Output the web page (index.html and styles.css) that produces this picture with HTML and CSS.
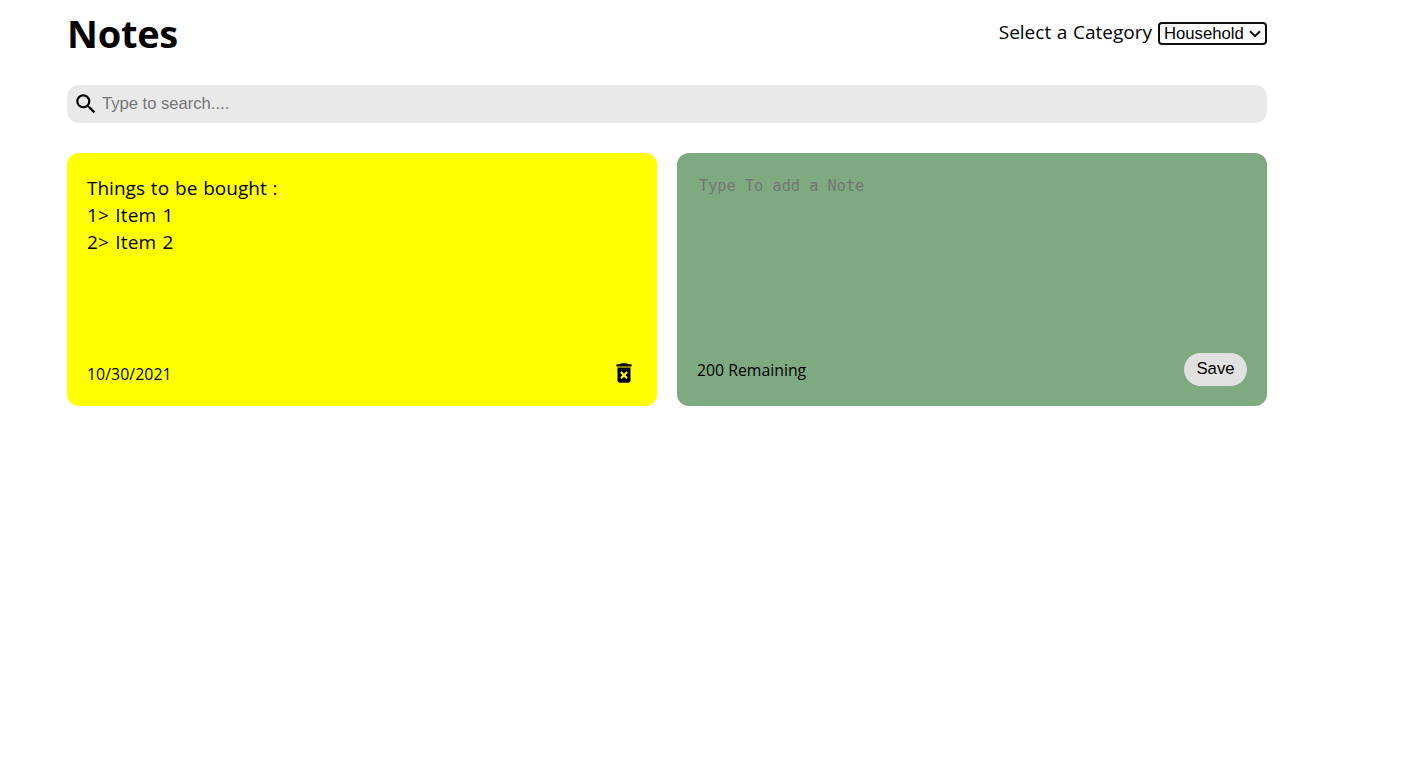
FILE: index.html
```html
<!DOCTYPE html>
<html lang="en">
<head>
<meta charset="utf-8">
<title>Notes</title>
<link rel="stylesheet" href="styles.css">
</head>
<body>
<main class="container">
  <header class="header">
    <h1 class="title">Notes</h1>
    <div class="category">
      <label class="category-label" for="category">Select a Category</label>
      <div class="select-box">
        <select class="select" id="category"><option>Household</option></select>
        <svg class="chevron" viewBox="0 0 12 8"><path d="M1 1.2 6 6.2 11 1.2" fill="none" stroke="#101010" stroke-width="2"/></svg>
      </div>
    </div>
  </header>
  <div class="search">
    <svg class="search-icon" viewBox="0 0 24 24"><path d="M15.5 14h-.79l-.28-.27A6.471 6.471 0 0 0 16 9.5 6.5 6.5 0 1 0 9.5 16c1.61 0 3.09-.59 4.23-1.57l.27.28v.79l5 4.99L20.49 19l-4.99-5zm-6 0C7.01 14 5 11.99 5 9.5S7.01 5 9.5 5 14 7.01 14 9.5 11.99 14 9.5 14z"/></svg>
    <input class="search-input" type="text" placeholder="Type to search....">
  </div>
  <section class="notes">
    <article class="note">
      <div class="note-text"><span class="line-title">Things to be bought :</span><span class="line-item">1&gt; Item 1</span><span class="line-item">2&gt; Item 2</span></div>
      <footer class="note-footer">
        <small class="date">10/30/2021</small>
        <svg class="delete-icon" viewBox="0 0 24 24"><path d="M6 19c0 1.1.9 2 2 2h8c1.1 0 2-.9 2-2V7H6v12zm2.46-7.12 1.41-1.41L12 12.59l2.12-2.12 1.41 1.41L13.41 14l2.12 2.12-1.41 1.41L12 15.41l-2.12 2.12-1.41-1.41L10.59 14l-2.13-2.12zM15.5 4l-1-1h-5l-1 1H5v2h14V4z"/></svg>
      </footer>
    </article>
    <article class="note note-new">
      <textarea class="new-text" placeholder="Type To add a Note"></textarea>
      <footer class="note-footer">
        <small class="remaining">200 Remaining</small>
        <button class="save">Save</button>
      </footer>
    </article>
  </section>
</main>
</body>
</html>
```

FILE: styles.css
```css
* { box-sizing: border-box; }
body {
  margin: 0;
  background: #fff;
  color: #000;
  font-family: "Open Sans", "Noto Sans", sans-serif;
}
.container { width: 1200px; margin-left: 67px; }
.header {
  display: flex;
  justify-content: space-between;
  height: 85px;
}
.title {
  margin: 6px 0 0;
  font-size: 38px;
  line-height: 54px;
  font-weight: 700;
  letter-spacing: -.25px;
}
.category { display: flex; align-items: flex-start; gap: 6px; }
.category-label {
  margin-top: 19px;
  font-size: 19px;
  line-height: 27px;
  word-spacing: .7px;
  white-space: nowrap;
}
.select-box { display: grid; width: 109px; margin-top: 22px; }
.select {
  grid-area: 1 / 1;
  appearance: none;
  width: 109px;
  height: 23px;
  margin: 0;
  padding: 0 4px;
  border: 2px solid #101010;
  border-radius: 4px;
  background: #fff;
  color: #000;
  font: 16.7px "Liberation Sans", sans-serif;
}
.chevron {
  grid-area: 1 / 1;
  place-self: center end;
  width: 12px;
  height: 8px;
  margin-right: 6px;
  pointer-events: none;
}
.search {
  display: flex;
  align-items: center;
  height: 38px;
  padding: 0 6px;
  border-radius: 12px;
  background: #e9e9e9;
}
.search-icon { width: 26px; height: 26px; }
.search-input {
  flex: 1;
  height: 20px;
  margin: 0 0 1px;
  padding: 0 3px;
  border: 0;
  outline: 0;
  background: transparent;
  font: 16.6px "Liberation Sans", sans-serif;
}
.search-input::placeholder, .new-text::placeholder { color: #757575; opacity: 1; }
.notes {
  display: grid;
  grid-template-columns: 1fr 1fr;
  gap: 20px;
  margin-top: 30px;
}
.note {
  display: flex;
  flex-direction: column;
  justify-content: space-between;
  height: 253px;
  padding: 20px;
  border-radius: 12px;
  background: #ff0;
}
.note-new { background: #7fa980; }
.note-text {
  display: flex;
  flex-direction: column;
  align-items: flex-start;
  padding-top: 2px;
  font-size: 19px;
  line-height: 27px;
}
.line-title { word-spacing: 1px; }
.line-item { letter-spacing: .1px; word-spacing: 1.4px; }
.note-footer { display: flex; align-items: center; justify-content: space-between; height: 33px; }
.note:not(.note-new) .note-footer { height: 26px; }
.date, .remaining { font-size: 15.8px; line-height: 22px; }
.date { padding-top: 2px; letter-spacing: .08px; }
.delete-icon { width: 26px; height: 26px; }
.new-text {
  height: 140px;
  margin: 0;
  padding: 2px;
  border: 0;
  outline: 0;
  resize: none;
  background: transparent;
  font: 15.25px/22px "DejaVu Sans Mono", monospace;
}
.save {
  width: 63px;
  height: 33px;
  padding: 0 0 2px;
  border: 0;
  border-radius: 17px;
  background: #e1e1e1;
  color: #000;
  font: 16.7px "Liberation Sans", sans-serif;
}
```
